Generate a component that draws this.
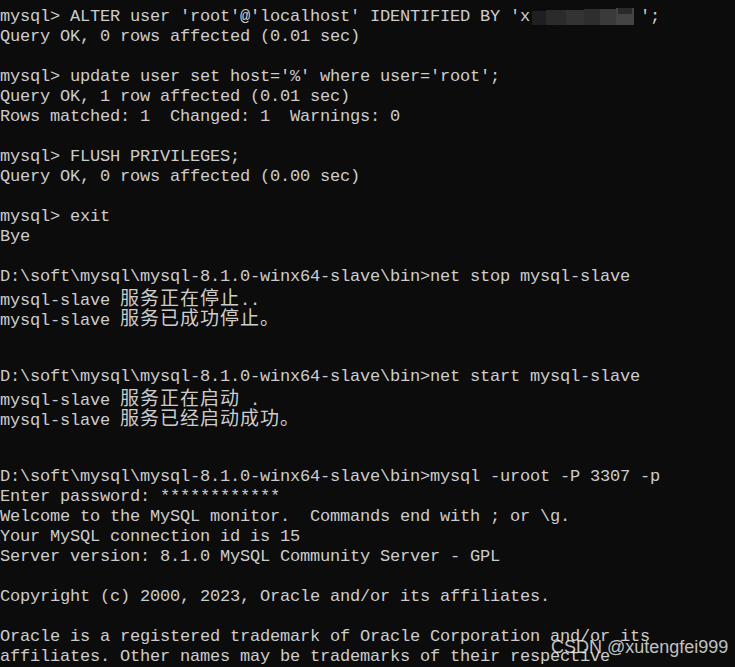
import React from "react";

const cjk = "font-['Noto_Sans_CJK_SC',sans-serif] text-[19px] leading-[20px] tracking-[1px]";

const Zh = ({ children }: { children: React.ReactNode }) => (
  <span className={cjk}>{children}</span>
);

const Line = ({ children }: { children?: React.ReactNode }) => (
  <div className="h-[20px] leading-[20px] whitespace-pre">{children}</div>
);

const Mosaic = () => (
  <span className="relative inline-block w-[110px] h-[20px] align-top">
    <span className="absolute left-[2px] top-[4px] w-[14px] h-[14px] bg-[#1f1f1f]" />
    <span className="absolute left-[16px] top-[3px] w-[20px] h-[15px] bg-[#2b2b2b]" />
    <span className="absolute left-[36px] top-[3px] w-[18px] h-[15px] bg-[#333333]" />
    <span className="absolute left-[54px] top-[2px] w-[16px] h-[16px] bg-[#2e2e2e]" />
    <span className="absolute left-[70px] top-[2px] w-[16px] h-[16px] bg-[#3a3a3a]" />
    <span className="absolute left-[86px] top-[1px] w-[18px] h-[17px] bg-[#444444]" />
    <span className="absolute left-[88px] top-[1px] w-[14px] h-[6px] bg-[#2a2a2a]" />
  </span>
);

export default function App() {
  return (
    <div className="relative w-[735px] h-[667px] overflow-hidden bg-[#0c0c0c] text-[#cccccc] pt-[7px] font-['Liberation_Mono',monospace] text-[17px] tracking-[-0.2px]">
      <Line>
        mysql&gt; ALTER user 'root'@'localhost' IDENTIFIED BY 'x<Mosaic />';
      </Line>
      <Line>Query OK, 0 rows affected (0.01 sec)</Line>
      <Line />
      <Line>mysql&gt; update user set host='%' where user='root';</Line>
      <Line>Query OK, 1 row affected (0.01 sec)</Line>
      <Line>Rows matched: 1  Changed: 1  Warnings: 0</Line>
      <Line />
      <Line>mysql&gt; FLUSH PRIVILEGES;</Line>
      <Line>Query OK, 0 rows affected (0.00 sec)</Line>
      <Line />
      <Line>mysql&gt; exit</Line>
      <Line>Bye</Line>
      <Line />
      <Line>D:\soft\mysql\mysql-8.1.0-winx64-slave\bin&gt;net stop mysql-slave</Line>
      <Line>
        mysql-slave <Zh>服务正在停止</Zh>..
      </Line>
      <Line>
        mysql-slave <Zh>服务已成功停止。</Zh>
      </Line>
      <Line />
      <Line />
      <Line>D:\soft\mysql\mysql-8.1.0-winx64-slave\bin&gt;net start mysql-slave</Line>
      <Line>
        mysql-slave <Zh>服务正在启动</Zh> .
      </Line>
      <Line>
        mysql-slave <Zh>服务已经启动成功。</Zh>
      </Line>
      <Line />
      <Line />
      <Line>D:\soft\mysql\mysql-8.1.0-winx64-slave\bin&gt;mysql -uroot -P 3307 -p</Line>
      <Line>Enter password: ************</Line>
      <Line>Welcome to the MySQL monitor.  Commands end with ; or \g.</Line>
      <Line>Your MySQL connection id is 15</Line>
      <Line>Server version: 8.1.0 MySQL Community Server - GPL</Line>
      <Line />
      <Line>Copyright (c) 2000, 2023, Oracle and/or its affiliates.</Line>
      <Line />
      <Line>Oracle is a registered trademark of Oracle Corporation and/or its</Line>
      <Line>affiliates. Other names may be trademarks of their respective</Line>

      <div className="absolute left-[551px] top-[635px] font-['Liberation_Sans',sans-serif] text-[18px] tracking-normal leading-[24px] text-white/75">
        CSDN @xutengfei999
      </div>
    </div>
  );
}
